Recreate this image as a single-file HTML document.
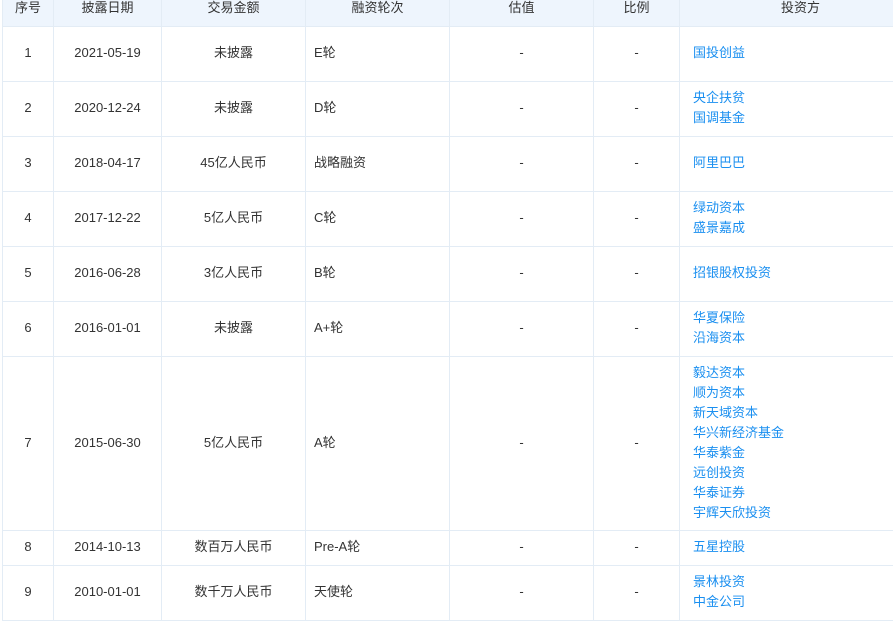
<!DOCTYPE html>
<html><head><meta charset="utf-8"><style>
body{margin:0;background:#fff;width:893px;height:624px;overflow:hidden;font-family:"Liberation Sans","Noto Sans CJK SC",sans-serif;font-size:13px;color:#333}
table{position:absolute;left:2px;top:-9px;border-collapse:collapse;table-layout:fixed;width:920px}
td,th{border:1px solid #e3ecf5;padding:0 0 2px 0;vertical-align:middle;text-align:center;font-weight:normal;line-height:16px}
th{background:#eef5fd;height:32px}
td{height:52px}
tr.s td{height:32px}
tr.b td{height:171px}
td.l{text-align:left;padding-left:8px}
td.f{text-align:left;padding-left:13px;line-height:20px;color:#1a8ff0}
</style></head><body>
<table>
<colgroup><col style="width:51px"><col style="width:108px"><col style="width:144px"><col style="width:144px"><col style="width:144px"><col style="width:86px"><col></colgroup>
<tr><th>序号</th><th>披露日期</th><th>交易金额</th><th>融资轮次</th><th>估值</th><th>比例</th><th>投资方</th></tr>
<tr><td>1</td><td>2021-05-19</td><td>未披露</td><td class="l">E轮</td><td>-</td><td>-</td><td class="f">国投创益</td></tr>
<tr><td>2</td><td>2020-12-24</td><td>未披露</td><td class="l">D轮</td><td>-</td><td>-</td><td class="f">央企扶贫<br>国调基金</td></tr>
<tr><td>3</td><td>2018-04-17</td><td>45亿人民币</td><td class="l">战略融资</td><td>-</td><td>-</td><td class="f">阿里巴巴</td></tr>
<tr><td>4</td><td>2017-12-22</td><td>5亿人民币</td><td class="l">C轮</td><td>-</td><td>-</td><td class="f">绿动资本<br>盛景嘉成</td></tr>
<tr><td>5</td><td>2016-06-28</td><td>3亿人民币</td><td class="l">B轮</td><td>-</td><td>-</td><td class="f">招银股权投资</td></tr>
<tr><td>6</td><td>2016-01-01</td><td>未披露</td><td class="l">A+轮</td><td>-</td><td>-</td><td class="f">华夏保险<br>沿海资本</td></tr>
<tr class="b"><td>7</td><td>2015-06-30</td><td>5亿人民币</td><td class="l">A轮</td><td>-</td><td>-</td><td class="f">毅达资本<br>顺为资本<br>新天域资本<br>华兴新经济基金<br>华泰紫金<br>远创投资<br>华泰证券<br>宇辉天欣投资</td></tr>
<tr class="s"><td>8</td><td>2014-10-13</td><td>数百万人民币</td><td class="l">Pre-A轮</td><td>-</td><td>-</td><td class="f">五星控股</td></tr>
<tr><td>9</td><td>2010-01-01</td><td>数千万人民币</td><td class="l">天使轮</td><td>-</td><td>-</td><td class="f">景林投资<br>中金公司</td></tr>
</table>
</body></html>
